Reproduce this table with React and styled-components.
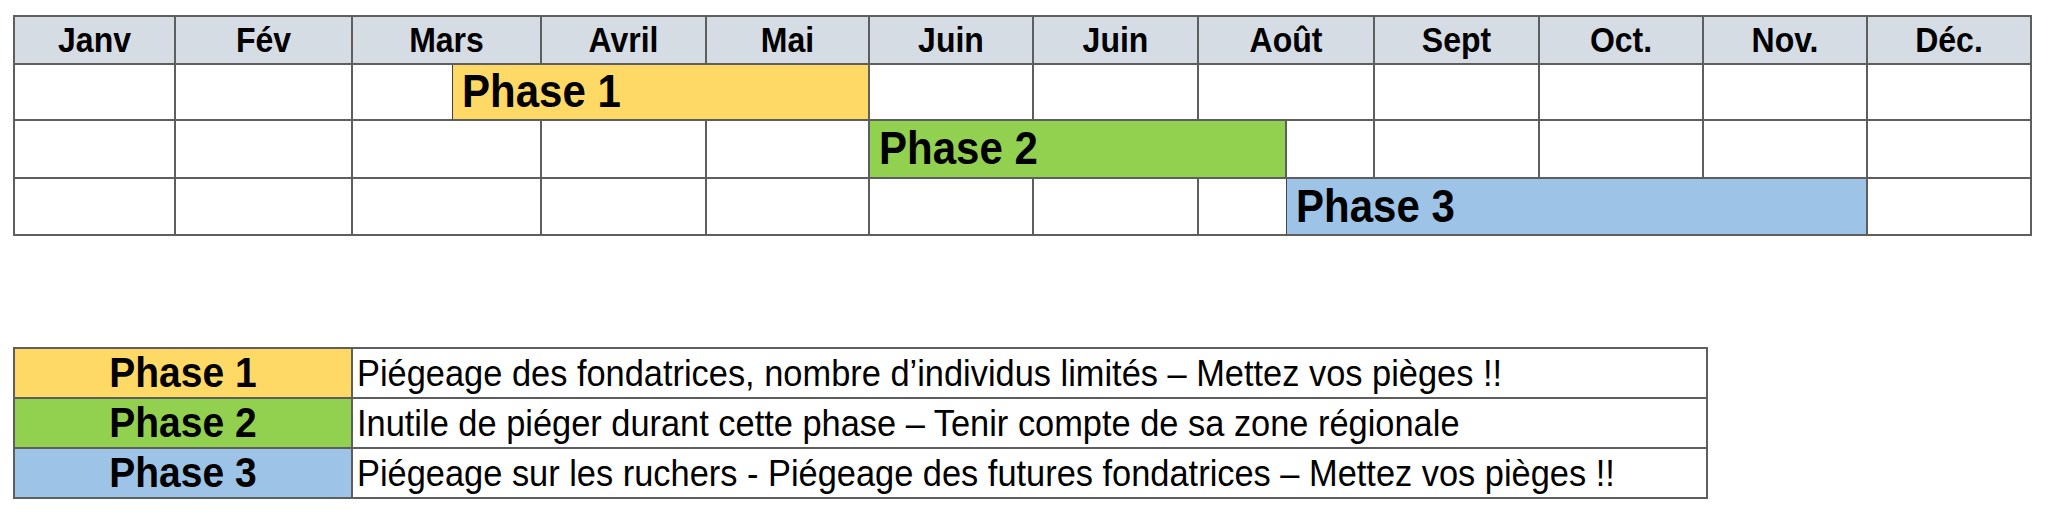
import styled, { createGlobalStyle } from 'styled-components';

const months = [
  { label: 'Janv', width: 161 },
  { label: 'Fév', width: 177 },
  { label: 'Mars', width: 189, split: 100 },
  { label: 'Avril', width: 165 },
  { label: 'Mai', width: 163 },
  { label: 'Juin', width: 164 },
  { label: 'Juin', width: 165 },
  { label: 'Août', width: 176, split: 88 },
  { label: 'Sept', width: 165 },
  { label: 'Oct.', width: 164 },
  { label: 'Nov.', width: 164 },
  { label: 'Déc.', width: 164 },
];

// each month is cut in two halves so a phase can start mid-month
const halfColumns = months
  .map(m => {
    const first = m.split ?? Math.round(m.width / 2);
    return `${first}px ${m.width - first}px`;
  })
  .join(' ');

const phases = [
  {
    name: 'Phase 1',
    color: '#ffd966',
    start: 5, // half-column index, 0 based
    end: 10,
    height: 54,
    text: 'Piégeage des fondatrices, nombre d’individus limités – Mettez vos pièges !!',
  },
  {
    name: 'Phase 2',
    color: '#92d050',
    start: 10,
    end: 15,
    height: 56,
    text: 'Inutile de piéger durant cette phase – Tenir compte de sa zone régionale',
  },
  {
    name: 'Phase 3',
    color: '#9dc3e6',
    start: 15,
    end: 22,
    height: 55,
    text: 'Piégeage sur les ruchers - Piégeage des futures fondatrices – Mettez vos pièges !!',
  },
];

function rowCells(phase) {
  const cells = [];
  let h = 0;
  while (h < 24) {
    if (h === phase.start) {
      cells.push(
        <Bar key={h} $from={h} $to={phase.end} $color={phase.color}>
          <Tall>{phase.name}</Tall>
        </Bar>
      );
      h = phase.end;
    } else if (h % 2 === 0 && h + 1 !== phase.start) {
      cells.push(<Cell key={h} $from={h} $to={h + 2} />);
      h += 2;
    } else {
      cells.push(<Cell key={h} $from={h} $to={h + 1} $thin={h + 1 === phase.start} />);
      h += 1;
    }
  }
  return cells;
}

function App() {
  return (
    <Page>
      <GlobalStyle />
      <Gantt>
        {months.map((m, i) => (
          <HeadCell key={i} $from={i * 2} $to={i * 2 + 2}>
            <Tall>{m.label}</Tall>
          </HeadCell>
        ))}
        {phases.map(p => (
          <Row key={p.name} $height={p.height}>{rowCells(p)}</Row>
        ))}
      </Gantt>
      <Legend>
        {phases.map(p => (
          <LegendRow key={p.name}>
            <LegendLabel $color={p.color}><Tall>{p.name}</Tall></LegendLabel>
            <LegendText><Tall>{p.text}</Tall></LegendText>
          </LegendRow>
        ))}
      </Legend>
    </Page>
  );
}

const GlobalStyle = createGlobalStyle`
  body {
    margin: 0;
    background: #ffffff;
    font-family: "Liberation Sans", Arial, sans-serif;
    color: #000;
  }
`;
const Page = styled.div`
  display: flex;
  flex-direction: column;
  align-items: flex-start;
  padding: 15px 0 0 13px;
`;
// the source sheet was stretched a little in height
const Tall = styled.span`
  display: inline-block;
  transform: scaleY(1.08);
`;
const Gantt = styled.div`
  display: grid;
  grid-template-columns: ${halfColumns};
  border-top: 2px solid #5e5e5e;
  border-left: 2px solid #5e5e5e;
`;
const HeadCell = styled.div`
  grid-column: ${p => p.$from + 1} / ${p => p.$to + 1};
  height: 48px;
  box-sizing: border-box;
  display: flex;
  align-items: center;
  justify-content: center;
  background: #d6dce4;
  border-right: 2px solid #5e5e5e;
  border-bottom: 2px solid #5e5e5e;
  font-size: 32px;
  font-weight: bold;
`;
const Row = styled.div`
  grid-column: 1 / -1;
  display: grid;
  grid-template-columns: subgrid;
  height: ${p => p.$height + 2}px;
`;
const Cell = styled.div`
  grid-column: ${p => p.$from + 1} / ${p => p.$to + 1};
  box-sizing: border-box;
  background: #ffffff;
  border-right: ${p => (p.$thin ? '1px solid #444' : '2px solid #5e5e5e')};
  border-bottom: 2px solid #5e5e5e;
`;
const Bar = styled.div`
  grid-column: ${p => p.$from + 1} / ${p => p.$to + 1};
  box-sizing: border-box;
  display: flex;
  align-items: center;
  padding-left: 9px;
  background: ${p => p.$color};
  border-right: 2px solid #5e5e5e;
  border-bottom: 2px solid #5e5e5e;
  font-size: 42px;
  font-weight: bold;
`;
const Legend = styled.div`
  margin-top: 111px;
  display: flex;
  flex-direction: column;
  width: 1691px;
  border-top: 2px solid #5e5e5e;
  border-left: 2px solid #5e5e5e;
  border-right: 2px solid #5e5e5e;
`;
const LegendRow = styled.div`
  display: grid;
  grid-template-columns: 338px 1fr;
  height: 50px;
  box-sizing: border-box;
  border-bottom: 2px solid #5e5e5e;
`;
const LegendLabel = styled.div`
  display: flex;
  align-items: center;
  justify-content: center;
  background: ${p => p.$color};
  border-right: 2px solid #5e5e5e;
  font-size: 39px;
  font-weight: bold;
`;
const LegendText = styled.div`
  display: flex;
  align-items: center;
  padding-left: 4px;
  font-size: 34.4px;
  white-space: nowrap;
`;

export default App;
